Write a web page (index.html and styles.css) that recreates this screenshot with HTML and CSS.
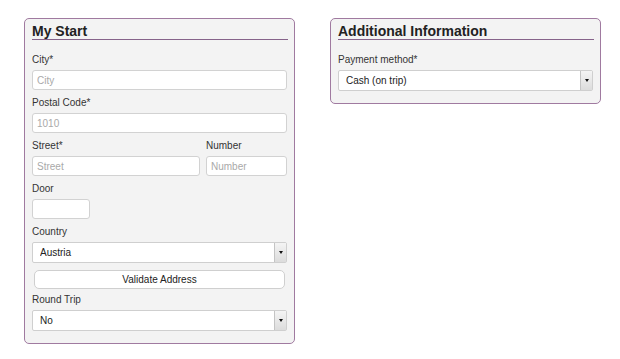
FILE: index.html
```html
<!DOCTYPE html>
<html lang="en">
<head>
    <meta charset="UTF-8">
    <title>Booking</title>
    <link rel="stylesheet" href="styles.css">
</head>
<body>
    <div class="page">
        <form class="panel">
            <h2 class="panel-title">My Start</h2>

            <label for="city">City*</label>
            <input type="text" id="city" placeholder="City">

            <label for="postal">Postal Code*</label>
            <input type="text" id="postal" placeholder="1010">

            <div class="street-row">
                <div class="field">
                    <label for="street">Street*</label>
                    <input type="text" id="street" placeholder="Street">
                </div>
                <div class="field">
                    <label for="number">Number</label>
                    <input type="text" id="number" placeholder="Number">
                </div>
            </div>

            <label for="door">Door</label>
            <input type="text" id="door" class="door">

            <label for="country">Country</label>
            <div class="select-wrap">
                <select id="country">
                    <option>Austria</option>
                </select>
            </div>

            <button type="button" class="validate">Validate Address</button>

            <label for="roundTrip">Round Trip</label>
            <div class="select-wrap">
                <select id="roundTrip">
                    <option>No</option>
                </select>
            </div>
        </form>

        <form class="panel">
            <h2 class="panel-title">Additional Information</h2>

            <label for="payment">Payment method*</label>
            <div class="select-wrap">
                <select id="payment">
                    <option>Cash (on trip)</option>
                </select>
            </div>
        </form>
    </div>
</body>
</html>
```

FILE: styles.css
```css
/* Global Styles */

* {
    margin: 0;
    padding: 0;
    box-sizing: border-box;
}

body {
    font-family: 'Liberation Sans', Arial, sans-serif;
    background-color: #fff;
    color: #333;
}

.page {
    display: flex;
    align-items: flex-start;
    gap: 35px;
    padding: 18px 0 0 24px;
}

/* Panel Styles */

.panel {
    display: flex;
    flex-direction: column;
    width: 271px;
    background-color: #f3f3f3;
    border: 1px solid #a07aa0;
    border-radius: 5px;
    padding: 4px 7px 12px 7px;
}

.panel-title {
    font-size: 14px;
    line-height: 16px;
    font-weight: bold;
    color: #222;
    border-bottom: 1px solid #86638a;
    margin-bottom: 13px;
    margin-right: -1px;
}

/* Form Styles */

label {
    display: block;
    font-size: 10px;
    line-height: 14px;
    margin-bottom: 3px;
    color: #333;
}

input {
    display: block;
    width: 100%;
    height: 20px;
    margin-bottom: 6px;
    padding: 0 4px;
    font-family: inherit;
    font-size: 10px;
    color: #333;
    background-color: #fff;
    border: 1px solid #d2d2d2;
    border-radius: 3px;
}

input::placeholder {
    color: #a9a9a9;
}

input.door {
    width: 58px;
}

.street-row {
    display: grid;
    grid-template-columns: 1fr 81px;
    gap: 6px;
}

/* Select Styles */

.select-wrap {
    position: relative;
    height: 21px;
    margin-bottom: 7px;
}

.select-wrap:last-child {
    margin-bottom: 0;
}

.select-wrap select {
    appearance: none;
    -webkit-appearance: none;
    width: 100%;
    height: 21px;
    padding: 0 14px 0 7px;
    font-family: inherit;
    font-size: 10px;
    color: #222;
    background-color: #fff;
    border: 1px solid #cfcfcf;
    border-radius: 2px;
}

.select-wrap::after {
    content: "";
    position: absolute;
    top: 1px;
    right: 1px;
    bottom: 1px;
    width: 11px;
    border-left: 1px solid #c4c4c4;
    background: linear-gradient(#f4f4f4, #dcdcdc);
    pointer-events: none;
}

.select-wrap::before {
    content: "";
    position: absolute;
    top: 9px;
    right: 4px;
    border-left: 2px solid transparent;
    border-right: 2px solid transparent;
    border-top: 3px solid #111;
    z-index: 1;
    pointer-events: none;
}

/* Button Styles */

.validate {
    height: 19px;
    margin: 0 2px 4px 2px;
    font-family: inherit;
    font-size: 10px;
    color: #222;
    background-color: #fff;
    border: 1px solid #cfcfcf;
    border-radius: 5px;
    cursor: pointer;
}
```
